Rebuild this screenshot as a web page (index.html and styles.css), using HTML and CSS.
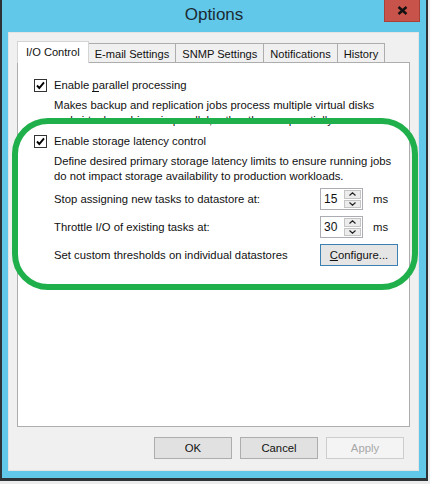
FILE: index.html
```html
<!DOCTYPE html>
<html lang="en">
  <head>
    <meta charset="UTF-8" />
    <meta name="viewport" content="width=device-width, initial-scale=1.0" />
    <title>Options</title>
    <link rel="stylesheet" href="styles.css">
  </head>
  <body>
    <div class="window">
      <div class="titlebar">
        <span></span>
        <span class="title">Options</span>
        <button class="close" title="Close">
          <svg width="11" height="9" viewBox="0 0 11 9"><path d="M1.5 1L9.5 8M9.5 1L1.5 8" stroke="#111" stroke-width="2.4" fill="none"/></svg>
        </button>
      </div>

      <div class="content">
        <div class="tabs">
          <div class="tab active">I/O Control</div>
          <div class="tab">E-mail Settings</div>
          <div class="tab">SNMP Settings</div>
          <div class="tab">Notifications</div>
          <div class="tab">History</div>
        </div>

        <div class="panel">
          <label class="check-row">
            <span class="checkbox"><svg width="11" height="11" viewBox="0 0 11 11"><path d="M2 5.5L4.3 8L9 2.3" stroke="#000" stroke-width="1.9" fill="none"/></svg></span>
            <span>Enable <u>p</u>arallel processing</span>
          </label>
          <p class="desc">
            Makes backup and replication jobs process multiple virtual disks<br>
            and virtual machines in parallel, rather than sequentially.
          </p>

          <label class="check-row second">
            <span class="checkbox"><svg width="11" height="11" viewBox="0 0 11 11"><path d="M2 5.5L4.3 8L9 2.3" stroke="#000" stroke-width="1.9" fill="none"/></svg></span>
            <span>Enable storage latency control</span>
          </label>
          <p class="desc">
            Define desired primary storage latency limits to ensure running jobs<br>
            do not impact storage availability to production workloads.
          </p>

          <div class="settings">
            <span class="label">Stop assigning new tasks to datastore at:</span>
            <div class="spin">
              <span class="spin-value">15</span>
              <div class="spin-btns">
                <span class="spin-btn"><svg width="7" height="4" viewBox="0 0 7 4"><path d="M0.5 3.5L3.5 0.8L6.5 3.5" stroke="#222" stroke-width="1.2" fill="none"/></svg></span>
                <span class="spin-btn"><svg width="7" height="4" viewBox="0 0 7 4"><path d="M0.5 0.5L3.5 3.2L6.5 0.5" stroke="#222" stroke-width="1.2" fill="none"/></svg></span>
              </div>
            </div>
            <span class="unit">ms</span>

            <span class="label">Throttle I/O of existing tasks at:</span>
            <div class="spin">
              <span class="spin-value">30</span>
              <div class="spin-btns">
                <span class="spin-btn"><svg width="7" height="4" viewBox="0 0 7 4"><path d="M0.5 3.5L3.5 0.8L6.5 3.5" stroke="#222" stroke-width="1.2" fill="none"/></svg></span>
                <span class="spin-btn"><svg width="7" height="4" viewBox="0 0 7 4"><path d="M0.5 0.5L3.5 3.2L6.5 0.5" stroke="#222" stroke-width="1.2" fill="none"/></svg></span>
              </div>
            </div>
            <span class="unit">ms</span>

            <span class="label">Set custom thresholds on individual datastores</span>
            <button class="btn configure"><u>C</u>onfigure...</button>
          </div>
        </div>

        <div class="actions">
          <button class="btn">OK</button>
          <button class="btn">Cancel</button>
          <button class="btn" disabled>Apply</button>
        </div>
      </div>

      <!-- highlight drawn over the dialog -->
      <div class="annotation"></div>
    </div>
  </body>
</html>
```

FILE: styles.css
```css
body {
  margin: 0;
  background: #ececec;
  font-family: "Liberation Sans", Arial, sans-serif;
  font-size: 11.3px;
  color: #111;
}
.window {
  position: relative;
  width: 428px;
  height: 481px;
  box-sizing: border-box;
  background: #62c8ea;
  border-left: 2px solid #2c3236;
  border-right: 2px solid #2c3236;
  border-bottom: 3px solid #2c3236;
}
.titlebar {
  height: 32px;
  display: grid;
  grid-template-columns: 1fr auto 1fr;
  align-items: start;
}
.title {
  font-size: 17px;
  line-height: 30px;
  color: #1b2a33;
}
.close {
  justify-self: end;
  margin-right: 6px;
  width: 36px;
  height: 22px;
  padding: 0;
  border: 1px solid #a84038;
  border-top: none;
  background: #c8534b;
  display: flex;
  align-items: center;
  justify-content: center;
}
.content {
  margin: 0 7px 0 6px;
  height: 439px;
  box-sizing: border-box;
  background: #f0f0f0;
  border: 1px solid #e4e4e4;
  padding: 8px 14px 0 8px;
}
.tabs {
  display: flex;
  align-items: flex-end;
  height: 21px;
  position: relative;
  z-index: 1;
}
.tab {
  height: 19px;
  line-height: 20px;
  box-sizing: border-box;
  padding: 0 6px;
  font-size: 11.1px;
  border: 1px solid #adadad;
  border-bottom: none;
  border-left: none;
  background: #f0f0f0;
}
.tab.active {
  height: 22px;
  line-height: 20px;
  margin-bottom: -1px;
  padding: 0 8px;
  border-left: 1px solid #d4d4d4;
  border-color: #d4d4d4;
  background: #fff;
}
.panel {
  width: 393px;
  height: 365px;
  box-sizing: border-box;
  border: 1px solid #adadad;
  background: #fff;
  padding: 15px 0 0 16px;
}
.check-row {
  display: flex;
  align-items: center;
  gap: 7px;
  height: 15px;
  line-height: 15px;
}
.check-row u {
  text-decoration: none;
  border-bottom: 1px solid #111;
  line-height: 11px;
}
.check-row.second {
  margin-top: 6px;
}
.checkbox {
  width: 13px;
  height: 13px;
  box-sizing: border-box;
  border: 1px solid #333;
  background: #fff;
  display: flex;
  align-items: center;
  justify-content: center;
}
.desc {
  margin: 5px 0 0 20px;
  line-height: 15px;
}
.settings {
  margin: 4px 0 0 20px;
  display: grid;
  grid-template-columns: 256px 43px auto;
  grid-auto-rows: 22px;
  column-gap: 10px;
  row-gap: 6px;
  align-items: center;
}
.spin {
  display: flex;
  height: 22px;
  box-sizing: border-box;
  border: 1px solid #abadb3;
  background: #fff;
}
.spin-value {
  flex: 1;
  padding-left: 3px;
  line-height: 20px;
  font-size: 12px;
}
.spin-btns {
  width: 17px;
  display: flex;
  flex-direction: column;
  padding: 1px;
  gap: 1px;
}
.spin-btn {
  flex: 1;
  background: #ececec;
  border: 1px solid #c4c4c4;
  display: flex;
  align-items: center;
  justify-content: center;
}
.btn {
  width: 78px;
  height: 22px;
  padding: 0;
  font-family: inherit;
  font-size: 11.3px;
  color: #111;
  background: #e1e1e1;
  border: 1px solid #adadad;
}
.btn:disabled {
  color: #a8a8a8;
  background: #f4f4f4;
  border-color: #cdcdcd;
}
.configure {
  grid-column: 2 / 4;
  justify-self: start;
  border-color: #3c7fb1;
  background: #e5e5e5;
}
.actions {
  display: flex;
  justify-content: flex-end;
  gap: 8px;
  padding-top: 10px;
}
.annotation {
  position: absolute;
  left: 10px;
  top: 118px;
  width: 406px;
  height: 172px;
  box-sizing: border-box;
  border: 6px solid #20b04b;
  border-radius: 36px;
}
```
